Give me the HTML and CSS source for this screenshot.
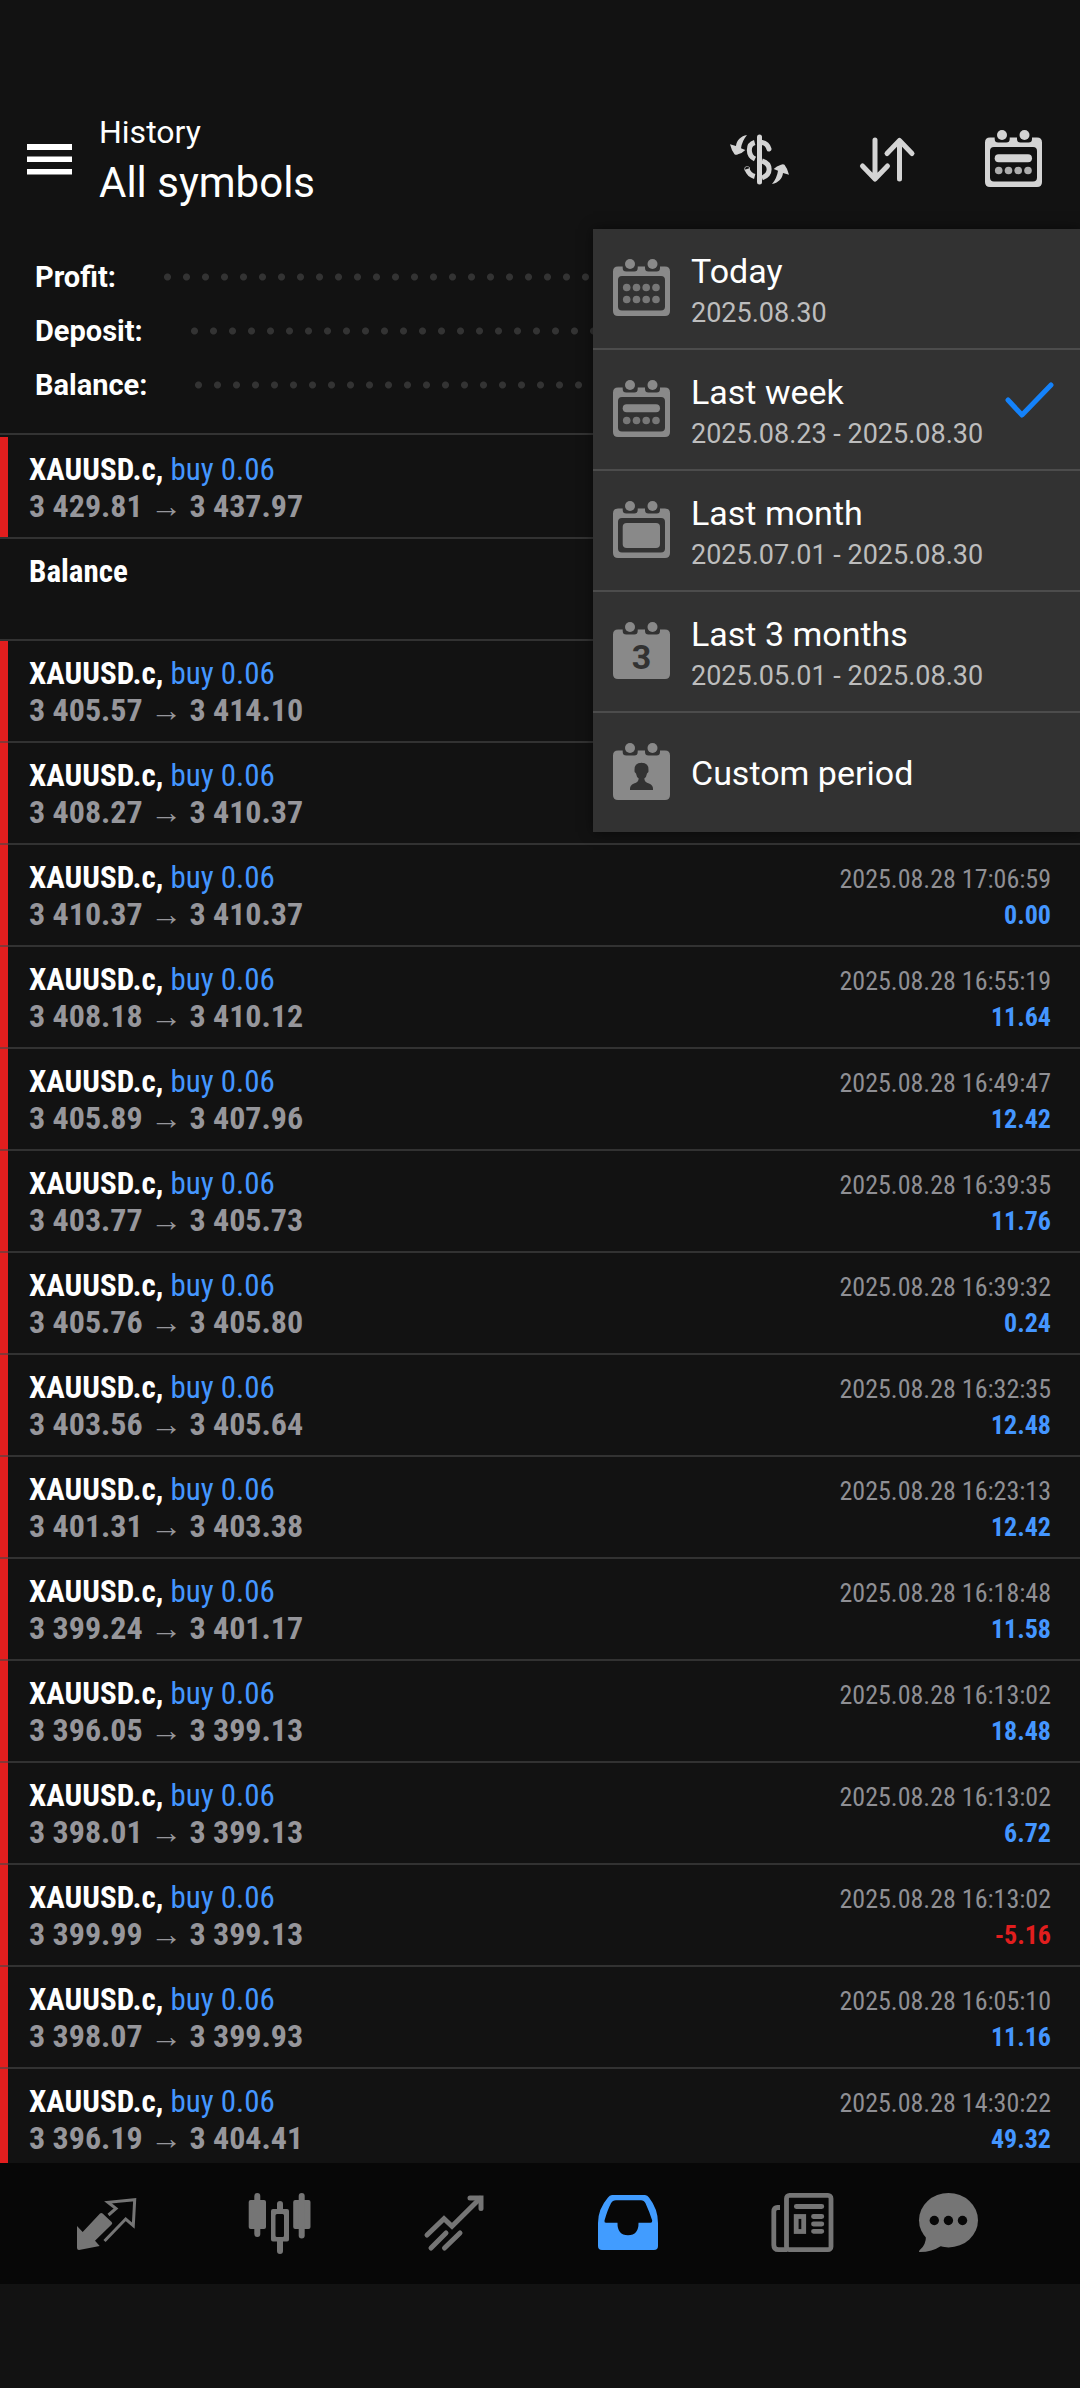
FILE: index.html
```
<!DOCTYPE html>
<html lang="en">
<head>
    <meta charset="UTF-8">
    <meta name="viewport" content="width=device-width, initial-scale=1.0">
    <title>History</title>
    <link rel="stylesheet" href="styles.css">
</head>
<body>
    <svg class="defs" width="0" height="0" aria-hidden="true">
        <defs>
            <!-- calendar top edge with two notches -->
            <g id="cal-rings">
                <circle cx="17" cy="5" r="5"/>
                <circle cx="39.5" cy="5" r="5"/>
            </g>
            <path id="cal-frame" fill-rule="evenodd" d="M5 7.5H9.7V9q0 3.5 3.5 3.5h8q3.500 0 3.500-3.500V7.500H32V9q0 3.500 3.500 3.500h8q3.500 0 3.500-3.500V7.500h5q5 0 5 5V52q0 5-5 5H5q-5 0-5-5V12.500q0-5 5-5zM9 17q-4 0-4 4v26.500q0 4 4 4h39q4 0 4-4V21q0-4-4-4z"/>
            <path id="cal-solid" d="M5 7.5H9.7V9q0 3.500 3.500 3.500h8q3.500 0 3.500-3.500V7.500H32V9q0 3.500 3.500 3.500h8q3.500 0 3.500-3.500V7.500h5q5 0 5 5V52q0 5-5 5H5q-5 0-5-5V12.500q0-5 5-5z"/>
            <g id="cal-dots" opacity="0.8">
                <circle cx="13.700" cy="40.500" r="3.800"/>
                <circle cx="23.500" cy="40.500" r="3.800"/>
                <circle cx="33.200" cy="40.500" r="3.800"/>
                <circle cx="43" cy="40.500" r="3.800"/>
            </g>
            <g id="cal-week">
                <use href="#cal-rings"/>
                <use href="#cal-frame"/>
                <rect x="9.700" y="24.200" width="37.300" height="8" rx="4"/>
                <use href="#cal-dots"/>
            </g>
        </defs>
    </svg>

    <header class="header">
        <button class="menu-btn" aria-label="Menu">
            <svg width="46" height="32" viewBox="0 0 46 32"><path d="M0 0h45v6H0zM0 12.500h45v5.500H0zM0 25h45v5.500H0z" fill="#fff"/></svg>
        </button>
        <div class="title">
            <p>History</p>
            <h1>All symbols</h1>
        </div>
        <div class="actions">
            <button aria-label="Currency">
                <svg width="64" height="60" viewBox="0 0 64 60">
                    <g fill="none" stroke="#d4d4d4" stroke-width="5">
                        <path d="M31.500 7v45" stroke-linecap="round"/>
                        <path d="M26.700 12.500C19.500 14.500 19.500 25.500 27 29"/>
                        <path d="M34 12.500q5.500 1 7 6.500" stroke-linecap="round"/>
                        <path d="M34 31c9.500 3 9.500 13.500 0 17"/>
                        <path d="M19 39q2 6 7.700 7.500"/>
                        <circle cx="19.200" cy="39" r="0.300" stroke-linecap="round"/>
                    </g>
                    <path id="turn" fill="#d4d4d4" d="M19 5C13 6 8.500 10.500 8 16L2 14.300Q3.500 20.500 6.500 24.300 8 25.300 10 24.300 14.500 23 17.300 20L13 18.300Q14 11 19 5z"/>
                    <use href="#turn" transform="rotate(180 31.500 29.500)"/>
                </svg>
            </button>
            <button aria-label="Sort">
                <svg width="64" height="60" viewBox="0 0 64 60">
                    <g fill="none" stroke="#d4d4d4" stroke-width="5" stroke-linecap="round" stroke-linejoin="round">
                        <path d="M20 10v38M7.500 36L20 49l12.500-13"/>
                        <path d="M44.500 49V11M32 23.500L44.500 10.500 57 23.500"/>
                    </g>
                </svg>
            </button>
            <button aria-label="Period">
                <svg width="64" height="60" viewBox="-3 0 64 60" fill="#d4d4d4"><use href="#cal-week"/></svg>
            </button>
        </div>

        <ul class="period-menu">
            <li>
                <button>
                    <svg width="58" height="59" viewBox="0 0 58 59">
                        <use href="#cal-rings"/><use href="#cal-frame"/><use href="#cal-dots"/>
                        <use href="#cal-dots" y="-12"/>
                    </svg>
                    <span class="label">Today<small>2025.08.30</small></span>
                </button>
            </li>
            <li>
                <button>
                    <svg width="58" height="59" viewBox="0 0 58 59"><use href="#cal-week"/></svg>
                    <span class="label">Last week<small>2025.08.23 - 2025.08.30</small></span>
                    <svg class="check" width="52" height="38" viewBox="0 0 52 38"><path d="M4 19l14 15L47 4"/></svg>
                </button>
            </li>
            <li>
                <button>
                    <svg width="58" height="59" viewBox="0 0 58 59">
                        <use href="#cal-rings"/><use href="#cal-frame"/>
                        <rect x="9.700" y="22" width="37.300" height="25" rx="4"/>
                    </svg>
                    <span class="label">Last month<small>2025.07.01 - 2025.08.30</small></span>
                </button>
            </li>
            <li>
                <button>
                    <svg width="58" height="59" viewBox="0 0 58 59">
                        <use href="#cal-rings"/><use href="#cal-solid"/>
                        <text class="cal-num" x="28.500" y="46.500">3</text>
                    </svg>
                    <span class="label">Last 3 months<small>2025.05.01 - 2025.08.30</small></span>
                </button>
            </li>
            <li>
                <button>
                    <svg width="58" height="59" viewBox="0 0 58 59">
                        <use href="#cal-rings"/><use href="#cal-solid"/>
                        <path fill="#323232" d="M17 47q-.5-5 4-6.500 4.500-1 4.700-5-2.200-1.500-2.700-5-2-1-1.500-3.500-.5-7 7-7.300 7.500.3 7 7.300.5 2.500-1.500 3.500-.5 3.500-2.700 5 .2 4 4.700 5 4.500 1.500 4 6.500z"/>
                    </svg>
                    <span class="label">Custom period</span>
                </button>
            </li>
        </ul>
    </header>

    <main class="content">
        <div class="summary">
            <p><b>Profit:</b><i></i></p>
            <p><b>Deposit:</b><i></i></p>
            <p><b>Balance:</b><i></i></p>
        </div>

        <ul class="deals">
            <li class="deal">
                <div><b>XAUUSD.c,</b> <span class="buy">buy 0.06</span><p>3 429.81 <span class="arrow">→</span> 3 437.97</p></div>
            </li>
            <li>
                <div><b>Balance</b></div>
            </li>
            <li class="deal">
                <div><b>XAUUSD.c,</b> <span class="buy">buy 0.06</span><p>3 405.57 <span class="arrow">→</span> 3 414.10</p></div>
            </li>
            <li class="deal">
                <div><b>XAUUSD.c,</b> <span class="buy">buy 0.06</span><p>3 408.27 <span class="arrow">→</span> 3 410.37</p></div>
            </li>
            <li class="deal">
                <div><b>XAUUSD.c,</b> <span class="buy">buy 0.06</span><p>3 410.37 <span class="arrow">→</span> 3 410.37</p></div>
                <div class="result"><time>2025.08.28 17:06:59</time><strong>0.00</strong></div>
            </li>
            <li class="deal">
                <div><b>XAUUSD.c,</b> <span class="buy">buy 0.06</span><p>3 408.18 <span class="arrow">→</span> 3 410.12</p></div>
                <div class="result"><time>2025.08.28 16:55:19</time><strong>11.64</strong></div>
            </li>
            <li class="deal">
                <div><b>XAUUSD.c,</b> <span class="buy">buy 0.06</span><p>3 405.89 <span class="arrow">→</span> 3 407.96</p></div>
                <div class="result"><time>2025.08.28 16:49:47</time><strong>12.42</strong></div>
            </li>
            <li class="deal">
                <div><b>XAUUSD.c,</b> <span class="buy">buy 0.06</span><p>3 403.77 <span class="arrow">→</span> 3 405.73</p></div>
                <div class="result"><time>2025.08.28 16:39:35</time><strong>11.76</strong></div>
            </li>
            <li class="deal">
                <div><b>XAUUSD.c,</b> <span class="buy">buy 0.06</span><p>3 405.76 <span class="arrow">→</span> 3 405.80</p></div>
                <div class="result"><time>2025.08.28 16:39:32</time><strong>0.24</strong></div>
            </li>
            <li class="deal">
                <div><b>XAUUSD.c,</b> <span class="buy">buy 0.06</span><p>3 403.56 <span class="arrow">→</span> 3 405.64</p></div>
                <div class="result"><time>2025.08.28 16:32:35</time><strong>12.48</strong></div>
            </li>
            <li class="deal">
                <div><b>XAUUSD.c,</b> <span class="buy">buy 0.06</span><p>3 401.31 <span class="arrow">→</span> 3 403.38</p></div>
                <div class="result"><time>2025.08.28 16:23:13</time><strong>12.42</strong></div>
            </li>
            <li class="deal">
                <div><b>XAUUSD.c,</b> <span class="buy">buy 0.06</span><p>3 399.24 <span class="arrow">→</span> 3 401.17</p></div>
                <div class="result"><time>2025.08.28 16:18:48</time><strong>11.58</strong></div>
            </li>
            <li class="deal">
                <div><b>XAUUSD.c,</b> <span class="buy">buy 0.06</span><p>3 396.05 <span class="arrow">→</span> 3 399.13</p></div>
                <div class="result"><time>2025.08.28 16:13:02</time><strong>18.48</strong></div>
            </li>
            <li class="deal">
                <div><b>XAUUSD.c,</b> <span class="buy">buy 0.06</span><p>3 398.01 <span class="arrow">→</span> 3 399.13</p></div>
                <div class="result"><time>2025.08.28 16:13:02</time><strong>6.72</strong></div>
            </li>
            <li class="deal">
                <div><b>XAUUSD.c,</b> <span class="buy">buy 0.06</span><p>3 399.99 <span class="arrow">→</span> 3 399.13</p></div>
                <div class="result"><time>2025.08.28 16:13:02</time><strong class="loss">-5.16</strong></div>
            </li>
            <li class="deal">
                <div><b>XAUUSD.c,</b> <span class="buy">buy 0.06</span><p>3 398.07 <span class="arrow">→</span> 3 399.93</p></div>
                <div class="result"><time>2025.08.28 16:05:10</time><strong>11.16</strong></div>
            </li>
            <li class="deal">
                <div><b>XAUUSD.c,</b> <span class="buy">buy 0.06</span><p>3 396.19 <span class="arrow">→</span> 3 404.41</p></div>
                <div class="result"><time>2025.08.28 14:30:22</time><strong>49.32</strong></div>
            </li>
        </ul>
    </main>

    <nav class="tabs">
        <a href="#" aria-label="Quotes">
            <svg width="64" height="64" viewBox="-1 0 64 64">
                <path fill="#757575" d="M2 34l5.700 6L25 21.500q1.300-1.200 2.600 0l9 8.500q1.300 1.300 0 2.600L20 48.700l4.700 5.300L4 58q-2 0-2-2z"/>
                <path fill="none" stroke="#757575" stroke-width="3" d="M33.500 23l7.500-6.500-8-6.200 26.700-2.600-1.400 26L50.700 27 29.500 49"/>
            </svg>
        </a>
        <a href="#" aria-label="Charts">
            <svg width="64" height="64" viewBox="0 0 64 64" fill="#757575">
                <rect x="0.700" y="8" width="17.300" height="29" rx="2"/>
                <rect x="6.300" y="1" width="6" height="44" rx="3"/>
                <path fill-rule="evenodd" d="M29 17v-5q0-3 3-3t3 3v5h4q2 0 2 2v28.500q0 2-2 2h-4V59q0 3-3 3t-3-3v-9.500h-4q-2 0-2-2V19q0-2 2-2zM29 22q-1.500 0-1.500 1.500v20q0 1.500 1.500 1.500h5.500q1.500 0 1.500-1.500v-20q0-1.500-1.500-1.500z"/>
                <rect x="45.200" y="8" width="17.300" height="29" rx="2"/>
                <rect x="50.700" y="1" width="6" height="45.500" rx="3"/>
            </svg>
        </a>
        <a href="#" aria-label="Trade">
            <svg width="64" height="64" viewBox="0 0 64 64">
                <g fill="none" stroke="#757575" stroke-width="5" stroke-linecap="round">
                    <path d="M5 43l17-16.300 8 7.600L58 6.500"/>
                    <path d="M48 6h11v10.500" stroke-linejoin="miter"/>
                    <path d="M9 56l15-15M22.500 56l15.500-15"/>
                </g>
            </svg>
        </a>
        <a href="#" aria-label="History" aria-current="page">
            <svg width="64" height="64" viewBox="0 0 64 64">
                <path fill="#419cff" fill-rule="evenodd" d="M16 3H49q2.500 0 4 2.500Q62 17 62 31v23q0 4-4 4H6q-4 0-4-4V31Q2 17 12 5.500 13.500 3 16 3zM20 8.300q-3.500 0-5 3Q11.500 18 8.500 28.500q-.5 2.200 1.500 2.200H21.500q-.3 12.300 10.500 12.600 10.800-.3 10.500-12.600H54.500q2 0 1.700-2.200Q53.500 20 49.500 11.300q-1.500-3-4.500-3z"/>
            </svg>
        </a>
        <a href="#" aria-label="News">
            <svg width="64" height="64" viewBox="0 0 64 64">
                <g fill="none" stroke="#757575" stroke-width="4.800">
                    <path d="M10 15.500H7.500q-3.700 0-3.700 4V53q0 4.700 4.700 4.700H17"/>
                    <rect x="16.500" y="3.400" width="44.500" height="54.300" rx="3"/>
                    <path stroke-linecap="round" d="M26.300 14.500h25.500M43.500 24.500h8.300M43.500 32h8.300M43.500 39.300h8.300"/>
                    <rect x="26.200" y="24.500" width="7.500" height="15"/>
                </g>
            </svg>
        </a>
        <a href="#" aria-label="Messages">
            <svg width="64" height="64" viewBox="0 0 64 64">
                <path fill="#757575" d="M11 44Q11 53 5 57.700 3 60 5 60 17 60 26 54z"/>
                <ellipse fill="#757575" cx="33.500" cy="28.200" rx="29.500" ry="27.200"/>
                <g fill="#070707"><circle cx="19.300" cy="28.500" r="4.700"/><circle cx="33.400" cy="28.500" r="4.700"/><circle cx="47.500" cy="28.500" r="4.700"/></g>
            </svg>
        </a>
    </nav>
</body>
</html>
```
FILE: styles.css
```
*{
    margin: 0;
    padding: 0;
    box-sizing: border-box;
}
body{
    display: flex;
    flex-direction: column;
    height: 100vh;
    padding-bottom: 104px;
    background: #121212;
    color: #fff;
    font-family: Roboto, "Liberation Sans", sans-serif;
}
ul{
    list-style: none;
}
button{
    background: none;
    border: none;
    color: inherit;
    font: inherit;
}
svg{
    display: block;
    flex: none;
}
.defs{
    position: absolute;
}

/* header */
.header{
    position: relative;
    display: flex;
    align-items: center;
    padding: 90px 34px 0 27px;
    height: 229px;
    flex: none;
}
.title{
    flex: 1;
    margin-left: 26px;
}
.title p{
    font-size: 32px;
    line-height: 46px;
}
.title h1{
    font-size: 42px;
    font-weight: 400;
    line-height: 56px;
}
.actions{
    display: flex;
    gap: 63px;
}

/* period drop-down */
.period-menu{
    position: absolute;
    top: 100%;
    right: 0;
    width: 487px;
    background: #323232;
    box-shadow: 0 0 12px rgba(0, 0, 0, 0.5);
    z-index: 1;
}
.period-menu li + li{
    border-top: 2px solid #4c4c4c;
}
.period-menu button{
    display: flex;
    align-items: center;
    width: 100%;
    height: 119px;
    padding: 0 24px 0 20px;
    fill: #898989;
    text-align: left;
}
.label{
    flex: 1;
    margin-left: 20px;
    font-size: 34px;
    line-height: 48px;
    white-space: nowrap;
}
.label small{
    display: block;
    font-size: 27px;
    line-height: 36px;
    color: #bdbdbd;
}
.check{
    margin-bottom: 20px;
    fill: none;
    stroke: #1482fa;
    stroke-width: 5;
    stroke-linecap: round;
    stroke-linejoin: round;
}
.cal-num{
    font-size: 34px;
    font-weight: 700;
    text-anchor: middle;
    fill: #323232;
}

/* totals */
.content{
    flex: 1;
    min-height: 0;
    overflow: hidden;
}
.summary{
    padding: 21px 35px;
}
.summary p{
    display: flex;
    align-items: center;
    height: 54px;
}
.summary b{
    font-size: 29px;
}
.summary i{
    flex: 1;
    height: 8px;
    margin-left: 42px;
    background: radial-gradient(circle, #333 3px, transparent 4px) 0 0 / 19px 8px repeat-x;
}

/* deals */
.deals{
    border-top: 2px solid #333;
    padding-top: 2px;
    font-family: "Roboto Condensed", "Liberation Sans Narrow", Roboto, sans-serif;
    font-size: 31px;
    line-height: 36px;
}
.deals li{
    display: flex;
    justify-content: space-between;
    align-items: baseline;
    padding: 15px 29px 8px;
    min-height: 100px;
}
.deals li + li{
    border-top: 2px solid rgba(72, 72, 72, 0.6);
    min-height: 102px;
}
.deals .deal{
    background: linear-gradient(#e21e1e, #e21e1e) no-repeat 0 0 / 8px 100%;
}
.deals .deal + .deal{
    background-origin: border-box;
}
.buy{
    color: #4496ff;
}
.deal p{
    font-size: 32px;
    font-weight: 700;
    color: #96969b;
}
.arrow{
    font-weight: 400;
}
.result{
    display: flex;
    flex-direction: column;
    align-items: flex-end;
    font-size: 26px;
}
.result time{
    color: #8f8f94;
}
.result strong{
    color: #4496ff;
}
.result .loss{
    color: #e21e1e;
}

/* bottom tabs */
.tabs{
    display: flex;
    flex: none;
    height: 121px;
    padding: 0 75px 0 19px;
    background: #070707;
}
.tabs a{
    display: flex;
    flex: 3;
    align-items: center;
    justify-content: center;
}
.tabs a:last-child{
    flex: 2;
}
```
